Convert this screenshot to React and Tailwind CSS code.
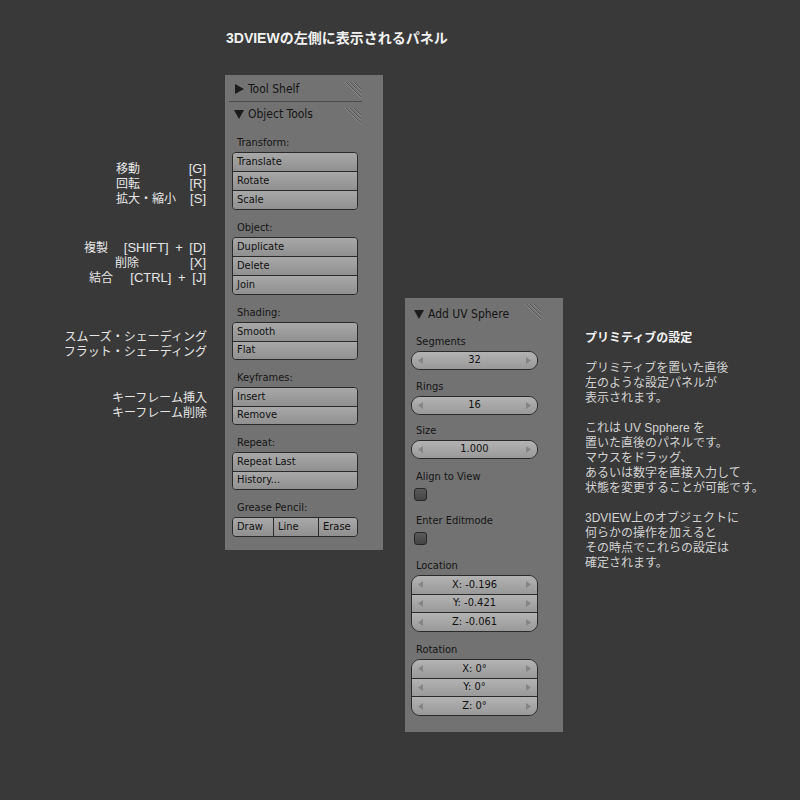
import React from 'react';

const ui = { fontFamily: '"DejaVu Sans Condensed", "DejaVu Sans", "Liberation Sans", sans-serif' };
const jp = { fontFamily: '"Liberation Sans", "Noto Sans CJK JP", sans-serif' };

function Stripes() {
  return (
    <svg width="17" height="17" viewBox="0 0 17 17" className="block">
      <line x1="1" y1="0" x2="17" y2="16" stroke="#8c8c8c" strokeWidth="1" />
      <line x1="2" y1="0" x2="17" y2="15" stroke="#555" strokeWidth="1" />
      <line x1="5" y1="0" x2="17" y2="12" stroke="#8c8c8c" strokeWidth="1" />
      <line x1="6" y1="0" x2="17" y2="11" stroke="#555" strokeWidth="1" />
      <line x1="9" y1="0" x2="17" y2="8" stroke="#8c8c8c" strokeWidth="1" />
      <line x1="10" y1="0" x2="17" y2="7" stroke="#555" strokeWidth="1" />
    </svg>
  );
}

function Tri({ open }) {
  return open ? (
    <svg width="10" height="10" viewBox="0 0 10 10" className="block">
      <polygon points="0,1 10,1 5,10" fill="#1c1c1c" />
    </svg>
  ) : (
    <svg width="10" height="10" viewBox="0 0 10 10" className="block">
      <polygon points="1,0 10,5 1,10" fill="#1c1c1c" />
    </svg>
  );
}

function Header({ title, open, h }) {
  return (
    <div className={`flex items-center pl-[9px] ${h}`}>
      <Tri open={open} />
      <span className="ml-[4px] text-[12px] text-[#151515]">{title}</span>
      <div className="ml-auto mr-[22px] self-start mt-[5px]">
        <Stripes />
      </div>
    </div>
  );
}

function Label({ children }) {
  return <div className="h-[16px] leading-[17px] ml-[5px] mb-[2px] text-[11px] text-[#151515]">{children}</div>;
}

function ButtonGroup({ items, h }) {
  return (
    <div className={`w-[126px] ${h} flex flex-col rounded-[4px] border border-[#2a2a2a] overflow-hidden`}>
      {items.map((t, i) => (
        <div
          key={t}
          className={`flex-1 flex items-center pl-[4px] text-[11px] text-[#111] bg-gradient-to-b from-[#a8a8a8] to-[#909090] ${i > 0 ? 'border-t border-[#2a2a2a]' : ''}`}
        >
          {t}
        </div>
      ))}
    </div>
  );
}

function Arrow({ dir }) {
  return (
    <svg width="5" height="7" viewBox="0 0 5 7" className="block">
      {dir === 'l' ? <polygon points="5,0 0,3.5 5,7" fill="#858585" /> : <polygon points="0,0 5,3.5 0,7" fill="#858585" />}
    </svg>
  );
}

function NumGroup({ items, h }) {
  return (
    <div className={`w-[127px] ${h} flex flex-col rounded-[9px] border border-[#2a2a2a] overflow-hidden`}>
      {items.map((t, i) => (
        <div
          key={t}
          className={`flex-1 flex items-center px-[6px] text-[11px] text-[#111] bg-gradient-to-b from-[#b3b3b3] to-[#999] ${i > 0 ? 'border-t border-[#2a2a2a]' : ''}`}
        >
          <Arrow dir="l" />
          <span className="flex-1 text-center">{t}</span>
          <Arrow dir="r" />
        </div>
      ))}
    </div>
  );
}

function Check() {
  return <div className="ml-[3px] mt-[4px] w-[13px] h-[13px] rounded-[3px] border border-[#262626] bg-gradient-to-b from-[#5a5a5a] to-[#454545]" />;
}

function Key({ children }) {
  return <span className="flex-1 text-right text-[13px] [word-spacing:3px]">{children}</span>;
}

export default function App() {
  return (
    <div className="w-[800px] h-[800px] bg-[#393939] overflow-hidden" style={jp}>
      <div className="pt-[29px] pl-[226px] text-[14px] leading-[18px] font-bold text-[#f2f2f2]">
        3DVIEWの左側に表示されるパネル
      </div>

      <div className="flex items-start mt-[28px]">
        {/* shortcut notes */}
        <div className="w-[207px] text-[12px] leading-[15px] text-[#e6e6e6]">
          <div className="mt-[86px] pr-[1px]">
            <div className="flex items-baseline h-[15px] pl-[116px]"><span>移動</span><Key>[G]</Key></div>
            <div className="flex items-baseline h-[15px] pl-[116px]"><span>回転</span><Key>[R]</Key></div>
            <div className="flex items-baseline h-[15px] pl-[116px]"><span>拡大・縮小</span><Key>[S]</Key></div>
          </div>
          <div className="mt-[34px] pr-[1px]">
            <div className="flex items-baseline h-[15px] pl-[84px]"><span>複製</span><Key>[SHIFT] + [D]</Key></div>
            <div className="flex items-baseline h-[15px] pl-[115px]"><span>削除</span><Key>[X]</Key></div>
            <div className="flex items-baseline h-[15px] pl-[89px]"><span>結合</span><Key>[CTRL] + [J]</Key></div>
          </div>
          <div className="mt-[45px] text-right">
            <div>スムーズ・シェーディング</div>
            <div>フラット・シェーディング</div>
          </div>
          <div className="mt-[31px] text-right">
            <div>キーフレーム挿入</div>
            <div>キーフレーム削除</div>
          </div>
        </div>

        {/* tool shelf */}
        <div className="ml-[18px] w-[158px] h-[475px] bg-[#727272]" style={ui}>
          <Header title="Tool Shelf" h="h-[26px] pt-[2px]" />
          <div className="ml-[4px] w-[133px] h-px bg-[#4c4c4c]" />
          <Header title="Object Tools" open h="h-[22px] pt-[1px]" />
          <div className="pl-[7px] pt-[10px]">
            <Label>Transform:</Label>
            <ButtonGroup items={['Translate', 'Rotate', 'Scale']} h="h-[58px]" />
            <div className="mt-[9px]"><Label>Object:</Label></div>
            <ButtonGroup items={['Duplicate', 'Delete', 'Join']} h="h-[58px]" />
            <div className="mt-[9px]"><Label>Shading:</Label></div>
            <ButtonGroup items={['Smooth', 'Flat']} h="h-[38px]" />
            <div className="mt-[9px]"><Label>Keyframes:</Label></div>
            <ButtonGroup items={['Insert', 'Remove']} h="h-[38px]" />
            <div className="mt-[9px]"><Label>Repeat:</Label></div>
            <ButtonGroup items={['Repeat Last', 'History...']} h="h-[38px]" />
            <div className="mt-[9px]"><Label>Grease Pencil:</Label></div>
            <div className="w-[126px] h-[20px] flex rounded-[4px] border border-[#2a2a2a] overflow-hidden text-[11px] text-[#111]">
              <div className="w-[40px] flex items-center pl-[4px] bg-gradient-to-b from-[#a8a8a8] to-[#909090]">Draw</div>
              <div className="w-[45px] flex items-center pl-[4px] border-l border-[#2a2a2a] bg-gradient-to-b from-[#a8a8a8] to-[#909090]">Line</div>
              <div className="flex-1 flex items-center pl-[4px] border-l border-[#2a2a2a] bg-gradient-to-b from-[#a8a8a8] to-[#909090]">Erase</div>
            </div>
          </div>
        </div>

        {/* add uv sphere */}
        <div className="ml-[22px] mt-[223px] w-[158px] h-[434px] bg-[#727272]" style={ui}>
          <Header title="Add UV Sphere" open h="h-[30px] pt-[1px]" />
          <div className="pl-[6px] pt-[5px]">
            <Label>Segments</Label>
            <NumGroup items={['32']} h="h-[19px]" />
            <div className="mt-[8px]"><Label>Rings</Label></div>
            <NumGroup items={['16']} h="h-[19px]" />
            <div className="mt-[7px]"><Label>Size</Label></div>
            <NumGroup items={['1.000']} h="h-[19px]" />
            <div className="mt-[9px]"><Label>Align to View</Label></div>
            <Check />
            <div className="mt-[11px]"><Label>Enter Editmode</Label></div>
            <Check />
            <div className="mt-[12px]"><Label>Location</Label></div>
            <NumGroup items={['X: -0.196', 'Y: -0.421', 'Z: -0.061']} h="h-[57px]" />
            <div className="mt-[9px]"><Label>Rotation</Label></div>
            <NumGroup items={['X: 0°', 'Y: 0°', 'Z: 0°']} h="h-[57px]" />
          </div>
        </div>

        {/* notes */}
        <div className="ml-[22px] mt-[256px] text-[12px] leading-[15px] text-[#d2d2d2]">
          <div className="font-bold text-[#f2f2f2]">プリミティブの設定</div>
          <div className="mt-[15px]">
            <div>プリミティブを置いた直後</div>
            <div>左のような設定パネルが</div>
            <div>表示されます。</div>
          </div>
          <div className="mt-[15px]">
            <div>これは UV Spphere を</div>
            <div>置いた直後のパネルです。</div>
            <div>マウスをドラッグ、</div>
            <div>あるいは数字を直接入力して</div>
            <div>状態を変更することが可能です。</div>
          </div>
          <div className="mt-[15px]">
            <div>3DVIEW上のオブジェクトに</div>
            <div>何らかの操作を加えると</div>
            <div>その時点でこれらの設定は</div>
            <div>確定されます。</div>
          </div>
        </div>
      </div>
    </div>
  );
}
